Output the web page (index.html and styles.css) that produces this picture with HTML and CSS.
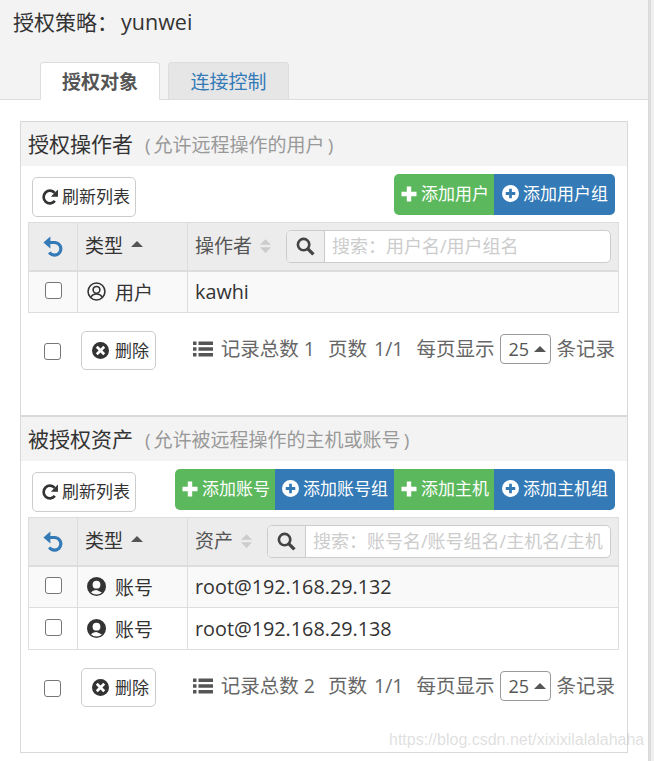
FILE: index.html
```html
<!DOCTYPE html>
<html lang="zh">
<head>
<meta charset="utf-8">
<title>授权策略</title>
<link rel="stylesheet" href="styles.css">
</head>
<body>
<svg class="defs" width="0" height="0">
  <defs>
    <symbol id="i-redo" viewBox="0 0 20 20"><path d="M15.4 14.4A7 7 0 1 1 15.2 5.4" fill="none" stroke="currentColor" stroke-width="3"/><path d="M18.8 1.8v8H11z" fill="currentColor"/></symbol>
    <symbol id="i-undo" viewBox="0 0 20 20"><path d="M4 6.2H11.4a6 6 0 1 1-5.4 9.4" fill="none" stroke="currentColor" stroke-width="3"/><path d="M7 0.5v11.4L0.4 6.2z" fill="currentColor"/></symbol>
    <symbol id="i-plus" viewBox="0 0 16 16"><path d="M5.8 0.5h4.4v5.3h5.3v4.4h-5.3v5.3H5.8v-5.3H0.5V5.8h5.3z" fill="currentColor"/></symbol>
    <symbol id="i-plus-c" viewBox="0 0 16 16"><path fill-rule="evenodd" d="M8 0a8 8 0 1 1 0 16A8 8 0 0 1 8 0zM6.7 3.5v3.2H3.5v2.6h3.2v3.2h2.6V9.3h3.2V6.7H9.3V3.5z" fill="currentColor"/></symbol>
    <symbol id="i-remove-c" viewBox="0 0 16 16"><path fill-rule="evenodd" d="M8 0a8 8 0 1 1 0 16A8 8 0 0 1 8 0zM5.4 3.6 3.6 5.4 6.2 8l-2.6 2.6 1.8 1.8L8 9.8l2.6 2.6 1.8-1.8L9.8 8l2.6-2.6-1.8-1.8L8 6.2z" fill="currentColor"/></symbol>
    <symbol id="i-search" viewBox="0 0 18 18"><circle cx="7.2" cy="7.2" r="5.4" fill="none" stroke="currentColor" stroke-width="2.5"/><path d="M11 11l5.5 5.5" fill="none" stroke="currentColor" stroke-width="3.2"/></symbol>
    <symbol id="i-list" viewBox="0 0 20 16"><path d="M0 0.5h3.5v3.5H0zM5.5 0.5H20v3.5H5.5zM0 6.2h3.5v3.5H0zM5.5 6.2H20v3.5H5.5zM0 12h3.5v3.5H0zM5.5 12H20v3.5H5.5z" fill="currentColor"/></symbol>
    <symbol id="i-user-o" viewBox="0 0 18 18"><circle cx="9" cy="9" r="8" fill="none" stroke="currentColor" stroke-width="1.5"/><circle cx="9" cy="7.4" r="3.2" fill="none" stroke="currentColor" stroke-width="1.5"/><path d="M3.6 14.6c1-2.4 3-3.3 5.4-3.3s4.4.9 5.4 3.3" fill="none" stroke="currentColor" stroke-width="1.5"/></symbol>
    <symbol id="i-user-f" viewBox="0 0 18 18"><path fill-rule="evenodd" d="M9 0a9 9 0 1 1 0 18A9 9 0 0 1 9 0zM9 3.6a3.7 3.7 0 1 0 0 7.4 3.7 3.7 0 0 0 0-7.4zM9 12.2c-2.4 0-4.2.8-5.2 2.4A7.4 7.4 0 0 0 9 16.6a7.4 7.4 0 0 0 5.2-2z" fill="currentColor"/></symbol>
  </defs>
</svg>
<div class="window">
  <div class="page">
    <header class="top">
      <h1 class="policy">授权策略：<span class="policy-name">yunwei</span></h1>
      <nav class="tabs">
        <a class="tab tab-active">授权对象</a>
        <a class="tab tab-idle">连接控制</a>
      </nav>
    </header>
    <main class="content">
      <div class="panel">
        <section class="section">
          <h2 class="section-head">授权操作者<small class="hint"><span class="paren-l">(</span>允许远程操作的用户<span class="paren-r">)</span></small></h2>
          <div class="toolbar">
            <button class="btn refresh"><svg class="ic ic-refresh"><use href="#i-redo"/></svg>刷新列表</button>
            <div class="btn-group">
              <button class="gbtn green"><svg class="ic ic-plus"><use href="#i-plus"/></svg>添加用户</button>
              <button class="gbtn blue blue-end"><svg class="ic ic-plus-c"><use href="#i-plus-c"/></svg>添加用户组</button>
            </div>
          </div>
          <table class="grid">
            <colgroup><col class="c1"><col class="c2"><col class="c3"></colgroup>
            <thead>
              <tr>
                <th class="center"><svg class="ic ic-undo"><use href="#i-undo"/></svg></th>
                <th><span class="th-label">类型<i class="sort-up"></i></span></th>
                <th>
                  <div class="th-search">
                    <span class="th-label">操作者<i class="sort-both"></i></span>
                    <div class="search">
                      <span class="search-addon"><svg class="ic ic-search"><use href="#i-search"/></svg></span>
                      <span class="search-input">搜索：用户名/用户组名</span>
                    </div>
                  </div>
                </th>
              </tr>
            </thead>
            <tbody>
              <tr class="odd">
                <td class="center"><span class="check"></span></td>
                <td><span class="kind"><svg class="ic ic-user"><use href="#i-user-o"/></svg>用户</span></td>
                <td class="value">kawhi</td>
              </tr>
            </tbody>
          </table>
          <div class="foot">
            <span class="check check-foot"></span>
            <button class="btn del"><svg class="ic ic-del"><use href="#i-remove-c"/></svg>删除</button>
            <div class="pager">
              <svg class="ic ic-list"><use href="#i-list"/></svg>
              <span class="pg-total">记录总数 1</span>
              <span class="pg-pages">页数 1/1</span>
              <span class="pg-show">每页显示</span>
              <span class="size">25<i class="sort-up size-caret"></i></span>
              <span>条记录</span>
            </div>
          </div>
        </section>
        <section class="section section-2">
          <h2 class="section-head">被授权资产<small class="hint"><span class="paren-l">(</span>允许被远程操作的主机或账号<span class="paren-r">)</span></small></h2>
          <div class="toolbar">
            <button class="btn refresh"><svg class="ic ic-refresh"><use href="#i-redo"/></svg>刷新列表</button>
            <div class="btn-group">
              <button class="gbtn green"><svg class="ic ic-plus"><use href="#i-plus"/></svg>添加账号</button>
              <button class="gbtn blue"><svg class="ic ic-plus-c"><use href="#i-plus-c"/></svg>添加账号组</button>
              <button class="gbtn green"><svg class="ic ic-plus"><use href="#i-plus"/></svg>添加主机</button>
              <button class="gbtn blue blue-end"><svg class="ic ic-plus-c"><use href="#i-plus-c"/></svg>添加主机组</button>
            </div>
          </div>
          <table class="grid">
            <colgroup><col class="c1"><col class="c2"><col class="c3"></colgroup>
            <thead>
              <tr>
                <th class="center"><svg class="ic ic-undo"><use href="#i-undo"/></svg></th>
                <th><span class="th-label">类型<i class="sort-up"></i></span></th>
                <th>
                  <div class="th-search">
                    <span class="th-label">资产<i class="sort-both"></i></span>
                    <div class="search search-wide">
                      <span class="search-addon"><svg class="ic ic-search"><use href="#i-search"/></svg></span>
                      <span class="search-input">搜索：账号名/账号组名/主机名/主机</span>
                    </div>
                  </div>
                </th>
              </tr>
            </thead>
            <tbody>
              <tr class="odd">
                <td class="center"><span class="check"></span></td>
                <td><span class="kind"><svg class="ic ic-user"><use href="#i-user-f"/></svg>账号</span></td>
                <td class="value">root@192.168.29.132</td>
              </tr>
              <tr>
                <td class="center"><span class="check"></span></td>
                <td><span class="kind"><svg class="ic ic-user"><use href="#i-user-f"/></svg>账号</span></td>
                <td class="value">root@192.168.29.138</td>
              </tr>
            </tbody>
          </table>
          <div class="foot">
            <span class="check check-foot"></span>
            <button class="btn del"><svg class="ic ic-del"><use href="#i-remove-c"/></svg>删除</button>
            <div class="pager">
              <svg class="ic ic-list"><use href="#i-list"/></svg>
              <span class="pg-total">记录总数 2</span>
              <span class="pg-pages">页数 1/1</span>
              <span class="pg-show">每页显示</span>
              <span class="size">25<i class="sort-up size-caret"></i></span>
              <span>条记录</span>
            </div>
          </div>
        </section>
      </div>
    </main>
  </div>
  <div class="rail"></div>
</div>
<div class="watermark">https://blog.csdn.net/xixixilalalahaha</div>
</body>
</html>
```

FILE: styles.css
```css
* { box-sizing: border-box; }
html, body { margin: 0; padding: 0; height: 100%; overflow: hidden; }
body {
  background: #fff;
  color: #333;
  font-family: "Open Sans", "Noto Sans CJK SC", sans-serif;
  font-size: 19px;
  position: relative;
}
.defs { display: block; height: 0; }
.window { display: flex; height: 761px; }
.page { width: 648px; flex: none; }
.rail { flex: 1; background: #f0f0f0; border-left: 3px solid #dcdcdc; }
.ic { display: block; flex: none; }

.top { background: #f3f3f3; height: 100px; border-bottom: 1px solid #ddd; padding: 7px 0 0 13px; }
.policy { margin: 0; font-size: 21px; font-weight: 400; line-height: 30px; height: 55px; color: #333; }
.policy-name { font-size: 21.5px; margin-left: 3px; }
.tabs { display: flex; gap: 8px; padding-left: 27px; }
.tab { width: 121px; height: 38px; display: flex; align-items: center; justify-content: center; padding-top: 2px; border-radius: 4px 4px 0 0; border: 1px solid #ddd; font-size: 19px; line-height: 1; }
.tab-active { width: 120px; background: #fff; border-bottom-color: #fff; font-weight: 700; color: #555; }
.tab-idle { background: #e6e6e6; border-bottom: 0; height: 37px; color: #337ab7; }

.content { padding: 21px 0 0 20px; }
.panel { width: 608px; height: 632px; border: 1px solid #d9d9d9; }
.section-2 { border-top: 2px solid #d9d9d9; }
.section:first-child { height: 293px; }
.section-head { margin: 0; height: 44px; background: #f3f3f3; padding-left: 7px; font-size: 21px; font-weight: 400; line-height: 44px; color: #333; }
.hint { font-size: 19px; color: #999; margin-left: 12px; }
.paren-l { margin-right: 3px; }
.paren-r { margin-left: 3px; }

.toolbar { display: flex; justify-content: space-between; align-items: flex-start; height: 48px; margin-top: 8px; padding: 0 12px 0 11px; }
.btn { font: inherit; background: #fff; color: #333; border: 1px solid #ccc; border-radius: 5px; padding: 0; display: flex; align-items: center; font-size: 17px; line-height: 1; }
.refresh { width: 104px; height: 40px; margin-top: 3px; padding: 0 0 1px 8px; gap: 3px; }
.ic-refresh { width: 18px; height: 18px; color: #333; }
.btn-group { display: flex; height: 41px; }
.gbtn { font: inherit; font-size: 17px; line-height: 1; color: #fff; border: 0; height: 41px; padding: 0 0 2px; display: flex; align-items: center; justify-content: center; gap: 4px; }
.gbtn:first-child { border-radius: 5px 0 0 5px; }
.gbtn:last-child { border-radius: 0 5px 5px 0; }
.green { width: 100px; background: #5cb85c; padding-left: 2px; }
.blue { width: 119px; background: #337ab7; padding-left: 1px; }
.blue-end { width: 121px; padding-left: 1px; }
.ic-plus { width: 16px; height: 16px; }
.ic-plus-c { width: 17px; height: 17px; }

.grid { width: 591px; margin-left: 7px; border-collapse: collapse; table-layout: fixed; }
.c1 { width: 49px; }
.c2 { width: 110px; }
.grid th, .grid td { border: 1px solid #ddd; padding: 0 0 0 7px; text-align: left; font-weight: 400; }
.grid th { height: 48px; background: #ececec; border-bottom-width: 2px; color: #555; }
.grid th:nth-child(2) { color: #333; }
.grid td { height: 42px; font-size: 19px; color: #333; }
.grid .value { font-size: 19.8px; }
.grid .center { padding: 0; }
.grid .center > * { margin: 0 auto; }
.odd td { background: #f9f9f9; }

.ic-undo { width: 21px; height: 21px; color: #337ab7; }
.th-label { display: inline-flex; align-items: center; line-height: 1; }
.sort-up { display: inline-block; width: 0; height: 0; margin: -6px 0 0 8px; border: 6px solid transparent; border-top: 0; border-bottom: 6px solid #555; }
.sort-both { display: inline-block; width: 11px; height: 14px; margin-left: 8px; background: linear-gradient(#ccc, #ccc); clip-path: polygon(50% 0, 100% 40%, 0 40%, 0 58%, 100% 58%, 50% 100%, 0 58%, 0 40%); }

.th-search { display: flex; align-items: center; }
.search { display: flex; height: 33px; margin-left: 15px; width: 325px; border: 1px solid #ccc; border-radius: 5px; background: #fff; overflow: hidden; }
.search-wide { margin-left: 15px; width: 344px; }
.search-addon { width: 38px; flex: none; background: #eee; border-right: 1px solid #ccc; display: flex; align-items: center; justify-content: center; color: #444; }
.ic-search { width: 19px; height: 19px; }
.search-input { flex: 1; padding-left: 7px; font-size: 18px; line-height: 31px; color: #ccc; white-space: nowrap; overflow: hidden; }

.check { display: block; width: 17px; height: 17px; background: #fff; border: 1px solid #767676; border-radius: 3px; }
.grid .check { position: relative; top: -1px; }
.kind { display: flex; align-items: center; gap: 9px; padding-left: 2px; }
.ic-user { width: 19px; height: 19px; color: #333; }

.foot { display: flex; align-items: flex-start; padding: 18px 12px 0 23px; }
.check-foot { margin-top: 12px; }
.del { width: 75px; height: 39px; margin-left: 20px; padding-left: 10px; gap: 6px; font-size: 17px; }
.ic-del { width: 17px; height: 17px; color: #333; }
.pager { display: flex; align-items: center; margin-left: auto; height: 37px; margin-top: -1px; font-size: 19.5px; line-height: 1; color: #666; white-space: nowrap; }
.ic-list { width: 20px; height: 16px; margin-right: 8px; color: #555; }
.pg-pages { margin-left: 13px; word-spacing: 2px; }
.pg-show { margin-left: 13px; }
.size { width: 51px; height: 30px; margin: 0 5px 0 6px; display: flex; align-items: center; padding-left: 7px; border: 1px solid #999; border-radius: 4px; font-size: 18px; color: #555; }
.size-caret { margin: 0 0 0 5px; }

.watermark { position: absolute; left: 389px; top: 731px; font-family: "Liberation Sans", sans-serif; font-size: 16px; color: rgba(170, 170, 170, .38); white-space: nowrap; }
```
